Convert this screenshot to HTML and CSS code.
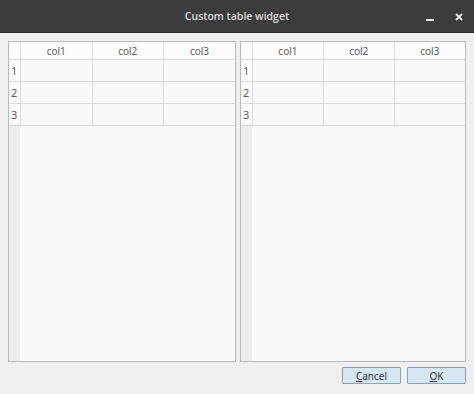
FILE: index.html
```html
<!DOCTYPE html>
<html lang="en">
<head>
    <meta charset="UTF-8">
    <title>Custom table widget</title>
    <link rel="stylesheet" href="styles.css">
</head>
<body>
    <div class="window">
        <div class="titlebar">
            <span class="title">Custom table widget</span>
            <div class="window-controls">
                <svg class="ctl" width="10" height="10" viewBox="0 0 10 10"><rect x="1" y="7" width="8" height="2" fill="#e6e6e6"/></svg>
                <svg class="ctl" width="10" height="10" viewBox="0 0 10 10"><path d="M2 2 L8 8 M8 2 L2 8" stroke="#e6e6e6" stroke-width="2"/></svg>
            </div>
        </div>

        <div class="content">
            <div class="tables">
                <div class="table-frame">
                    <table class="grid">
                        <tr class="head"><th class="corner"></th><th>col1</th><th>col2</th><th>col3</th></tr>
                        <tr><th class="rownum">1</th><td></td><td></td><td></td></tr>
                        <tr><th class="rownum">2</th><td></td><td></td><td></td></tr>
                        <tr><th class="rownum">3</th><td></td><td></td><td></td></tr>
                    </table>
                </div>
                <div class="table-frame">
                    <table class="grid">
                        <tr class="head"><th class="corner"></th><th>col1</th><th>col2</th><th>col3</th></tr>
                        <tr><th class="rownum">1</th><td></td><td></td><td></td></tr>
                        <tr><th class="rownum">2</th><td></td><td></td><td></td></tr>
                        <tr><th class="rownum">3</th><td></td><td></td><td></td></tr>
                    </table>
                </div>
            </div>

            <div class="buttons">
                <button class="btn"><u>C</u>ancel</button>
                <button class="btn"><u>O</u>K</button>
            </div>
        </div>
    </div>
</body>
</html>
```

FILE: styles.css
```css
body {
    margin: 0;
    font-family: "Noto Sans", "Open Sans", sans-serif;
    background-color: #efefef;
}

.window {
    width: 474px;
    height: 394px;
    display: flex;
    flex-direction: column;
}

.titlebar {
    height: 32px;
    background-color: #3c3c3c;
    border-bottom: 1px solid #2b2b2b;
    position: relative;
    display: flex;
    justify-content: center;
    align-items: center;
}

.title {
    color: #dcdcdc;
    font-family: "Open Sans", "Noto Sans", sans-serif;
    font-size: 10.5px;
    font-weight: 600;
}

.window-controls {
    position: absolute;
    right: 10px;
    top: 12px;
    display: flex;
    gap: 19px;
}

.content {
    padding: 8px 8px 0 8px;
}

.tables {
    display: grid;
    grid-template-columns: 228px 226px;
    gap: 4px;
    height: 321px;
}

.table-frame {
    border: 1px solid #b9b9b9;
    background: linear-gradient(to right, #ececec 11px, #f9f9f9 11px);
    overflow: hidden;
}

.grid {
    border-collapse: collapse;
    table-layout: fixed;
    width: 100%;
    font-size: 10px;
    color: #5a5a5a;
}

.grid th {
    font-weight: normal;
}

.head th {
    height: 17px;
    background-color: #fbfbfb;
    border-left: 1px solid #e0e0e0;
    border-bottom: 1px solid #dadada;
    padding: 0;
}

.head th.corner {
    width: 11px;
    border-left: none;
}

.grid td {
    height: 21px;
    border: 1px solid #dcdcdc;
    border-top: none;
    background-color: #f9f9f9;
    padding: 0;
}

.grid td:last-child {
    border-right: none;
}

.rownum {
    text-align: left;
    padding: 0 0 0 2px;
    background-color: #fbfbfb;
    border-bottom: 1px solid #dadada;
    font-size: 11px;
}

.buttons {
    display: flex;
    justify-content: flex-end;
    gap: 6px;
    margin-top: 5px;
}

.btn {
    width: 59px;
    height: 17px;
    background-color: #d6e6f3;
    border: 1px solid #8aa2b6;
    border-radius: 1px;
    font-family: "Noto Sans", "Open Sans", sans-serif;
    font-size: 10px;
    color: #333;
    padding: 0;
}
```
